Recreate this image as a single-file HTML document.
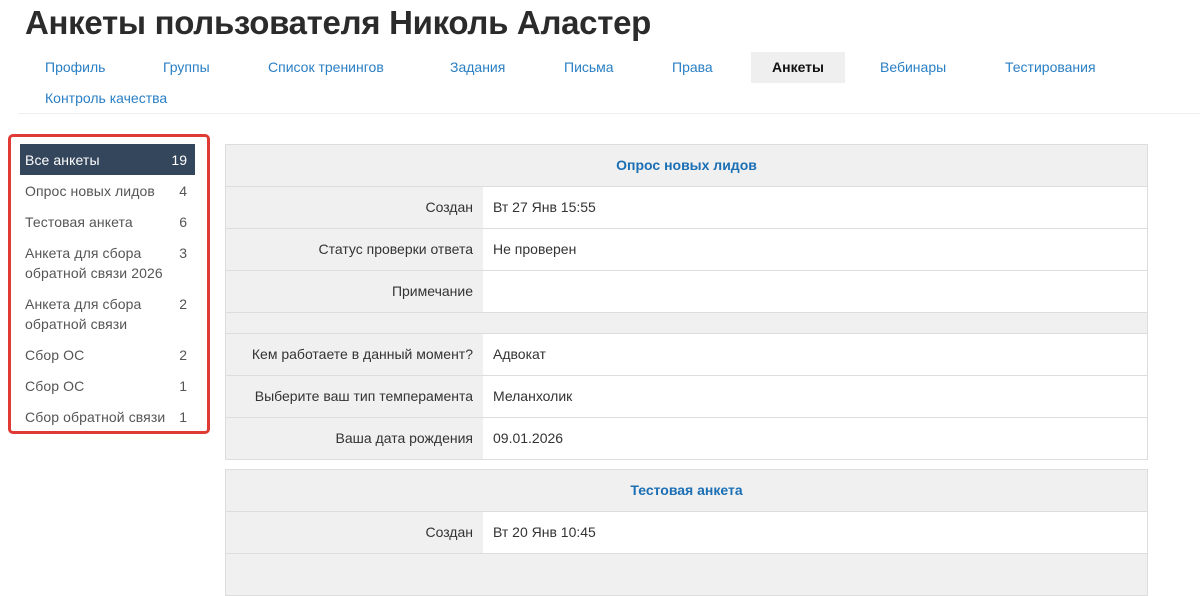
<!DOCTYPE html>
<html><head><meta charset="utf-8"><style>
*{margin:0;padding:0;box-sizing:border-box}
body{width:1200px;height:554px;overflow:hidden;background:#fff;font-family:"Liberation Sans","Noto Sans CJK SC",sans-serif;color:#333;font-size:14px;position:relative}
h1{position:absolute;left:25px;top:4px;font-size:33px;font-weight:bold;color:#2b2b2b;letter-spacing:-0.3px}
.tab{position:absolute;color:#2a7fc4;font-size:14px;top:59px}
.act{position:absolute;left:751px;top:52px;width:94px;height:31px;background:#efefef;color:#111;font-weight:bold;text-align:center;line-height:31px}
.hr{position:absolute;left:18px;right:0;top:113px;height:1px;background:#eee}
.side{position:absolute;left:8px;top:134px;width:202px;height:300px;border:3px solid #e03a34;border-radius:5px}
.it{position:absolute;left:25px;color:#555;font-size:14px;line-height:20px;letter-spacing:0.1px}
.n{position:absolute;left:170px;width:17px;text-align:right;color:#555;font-size:14px;line-height:20px}
.on{position:absolute;left:20px;top:144px;width:175px;height:31px;background:#34465c;color:#fff}
.tbl{position:absolute;left:225px;width:923px;background:#f0f0f0;border:1px solid #ddd}
.row{position:relative;height:42px;border-top:1px solid #ddd}
.row .l{position:absolute;left:0;width:247px;text-align:right;top:12px;color:#333}
.row .v{position:absolute;left:257px;right:0;top:0;bottom:0;background:#fff;padding:12px 10px;color:#333}
.hd{height:41px;text-align:center;color:#1b6fb5;font-weight:bold;line-height:41px}
</style></head><body>
<h1>Анкеты пользователя Николь Аластер</h1>
<div class="tab" style="left:45px">Профиль</div>
<div class="tab" style="left:163px">Группы</div>
<div class="tab" style="left:268px">Список тренингов</div>
<div class="tab" style="left:450px">Задания</div>
<div class="tab" style="left:564px">Письма</div>
<div class="tab" style="left:672px">Права</div>
<div class="act">Анкеты</div>
<div class="tab" style="left:880px">Вебинары</div>
<div class="tab" style="left:1005px">Тестирования</div>
<div class="tab" style="left:45px;top:90px">Контроль качества</div>
<div class="hr"></div>

<div class="side"></div>
<div class="on"></div>
<div class="it" style="top:150px;color:#fff">Все анкеты</div><div class="n" style="top:150px;color:#fff">19</div>
<div class="it" style="top:181px">Опрос новых лидов</div><div class="n" style="top:181px">4</div>
<div class="it" style="top:212px">Тестовая анкета</div><div class="n" style="top:212px">6</div>
<div class="it" style="top:243px">Анкета для сбора<br>обратной связи 2026</div><div class="n" style="top:243px">3</div>
<div class="it" style="top:294px">Анкета для сбора<br>обратной связи</div><div class="n" style="top:294px">2</div>
<div class="it" style="top:345px">Сбор ОС</div><div class="n" style="top:345px">2</div>
<div class="it" style="top:376px">Сбор ОС</div><div class="n" style="top:376px">1</div>
<div class="it" style="top:407px">Сбор обратной связи</div><div class="n" style="top:407px">1</div>

<div class="tbl" style="top:144px">
<div class="hd">Опрос новых лидов</div>
<div class="row"><div class="l">Создан</div><div class="v">Вт 27 Янв 15:55</div></div>
<div class="row"><div class="l">Статус проверки ответа</div><div class="v">Не проверен</div></div>
<div class="row"><div class="l">Примечание</div><div class="v"></div></div>
<div class="row" style="height:21px"></div>
<div class="row"><div class="l">Кем работаете в данный момент?</div><div class="v">Адвокат</div></div>
<div class="row"><div class="l">Выберите ваш тип темперамента</div><div class="v">Меланхолик</div></div>
<div class="row"><div class="l">Ваша дата рождения</div><div class="v">09.01.2026</div></div>
</div>
<div class="tbl" style="top:469px">
<div class="hd">Тестовая анкета</div>
<div class="row"><div class="l">Создан</div><div class="v">Вт 20 Янв 10:45</div></div>
<div class="row"></div>
</div>
</body></html>
